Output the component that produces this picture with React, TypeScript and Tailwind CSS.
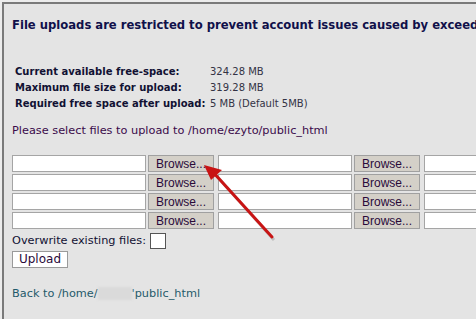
import React from 'react'

const font = { fontFamily: 'Verdana, "DejaVu Sans", sans-serif' }

function FileRow() {
  return (
    <div className="flex items-center h-[17px]">
      {[0, 1, 2].map(i => (
        <div key={i} className="flex items-center mr-[4px]">
          <div className="w-[134px] h-[17px] bg-white border border-[#a5a5a5] shrink-0" />
          <div className="ml-[2px] w-[66px] h-[17px] bg-[#d4d0c8] border border-[#a0a0a0] shrink-0 flex items-center justify-center text-[12px] leading-none text-[#2a0a3a] font-['Liberation_Sans',Arial,sans-serif]">
            Browse...
          </div>
        </div>
      ))}
    </div>
  )
}

export default function App() {
  return (
    <div className="relative w-[476px] h-[319px] overflow-hidden bg-[#ececec] pt-[2px] pl-[2px]" style={font}>
      <div className="h-full border-t-2 border-l-2 border-[#7a7a7a] bg-[#e4e4e4] pl-[8px] pt-[14px]">
        <div className="whitespace-nowrap text-[11.6px] font-bold leading-[14px] text-[#10104a]">
          File uploads are restricted to prevent account issues caused by exceeding your disk quota.
        </div>

        <div className="mt-[32px] ml-[3px] flex flex-col whitespace-nowrap text-[10px] leading-[16px] text-[#111133]">
          <div className="flex">
            <span className="w-[195px] shrink-0 font-bold">Current available free-space:</span>
            <span className="text-[#333344]">324.28 MB</span>
          </div>
          <div className="flex">
            <span className="w-[195px] shrink-0 font-bold">Maximum file size for upload:</span>
            <span className="text-[#333344]">319.28 MB</span>
          </div>
          <div className="flex">
            <span className="w-[195px] shrink-0 font-bold">Required free space after upload:</span>
            <span className="text-[#333344]">5 MB (Default 5MB)</span>
          </div>
        </div>

        <div className="mt-[12px] whitespace-nowrap text-[11.3px] leading-[14px] text-[#3a0a4a]">
          Please select files to upload to /home/ezyto/public_html
        </div>

        <div className="mt-[17px] flex flex-col gap-[2px]">
          <FileRow />
          <FileRow />
          <FileRow />
          <FileRow />
        </div>

        <div className="mt-[4px] flex items-center whitespace-nowrap text-[11.3px] text-[#111133]">
          <span>Overwrite existing files:</span>
          <div className="ml-[4px] w-[16px] h-[16px] bg-white border border-[#555]" />
        </div>
        <div className="mt-[1px] w-[56px] h-[17px] bg-white border border-[#9a9a9a] flex items-center justify-center text-[12px] leading-none text-[#2a0a3a]">
          Upload
        </div>

        <div className="mt-[19px] flex items-center whitespace-nowrap text-[11.3px] leading-[14px] text-[#1f5a6a]">
          <span>Back to /home/</span>
          <span className="inline-block w-[34px] h-[13px] bg-[#dadada] blur-[1px]" />
          <span>'public_html</span>
        </div>
      </div>

      <svg className="absolute left-0 top-0 pointer-events-none" width="476" height="319">
        <line x1="274" y1="240" x2="214" y2="173" stroke="#9a9a9a" strokeWidth="3" opacity="0.5" />
        <line x1="272" y1="237" x2="212" y2="171" stroke="#c81414" strokeWidth="3" strokeLinecap="round" />
        <polygon points="204,165 222,170 211,180" fill="#c81414" />
      </svg>
    </div>
  )
}
